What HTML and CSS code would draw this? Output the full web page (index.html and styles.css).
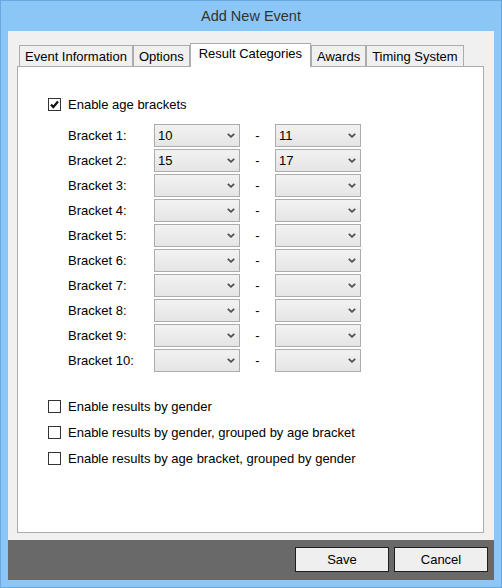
FILE: index.html
```html
<!DOCTYPE html>
<html lang="en">
<head>
    <meta charset="UTF-8">
    <title>Add New Event</title>
    <link rel="stylesheet" href="styles.css">
</head>
<body>
    <div class="window">
        <div class="titlebar">Add New Event</div>
        <div class="client">
            <div class="tabs">
                <div class="tabstrip">
                    <div class="tab">Event Information</div>
                    <div class="tab">Options</div>
                    <div class="tab active">Result Categories</div>
                    <div class="tab">Awards</div>
                    <div class="tab">Timing System</div>
                </div>
                <div class="pane">
                    <label class="check">
                        <span class="box"><svg width="11" height="11" viewBox="0 0 11 11"><polyline points="2,5.5 4.3,8 9,2.5" fill="none" stroke="#111" stroke-width="2.2"/></svg></span>
                        Enable age brackets
                    </label>

                    <div class="brackets" id="brackets"></div>

                    <div class="options">
                        <label class="check"><span class="box"></span>Enable results by gender</label>
                        <label class="check"><span class="box"></span>Enable results by gender, grouped by age bracket</label>
                        <label class="check"><span class="box"></span>Enable results by age bracket, grouped by gender</label>
                    </div>
                </div>
            </div>
            <div class="buttonbar">
                <button class="btn">Save</button>
                <button class="btn">Cancel</button>
            </div>
        </div>
    </div>

    <script>
        // bracket rows
        const values = [['10', '11'], ['15', '17']];
        const chevron = '<svg width="8" height="5" viewBox="0 0 8 5"><polyline points="0.8,0.8 4,3.8 7.2,0.8" fill="none" stroke="#505050" stroke-width="1.8"/></svg>';

        function dropdown(value) {
            return '<div class="select"><span>' + (value || '') + '</span>' + chevron + '</div>';
        }

        const brackets = document.getElementById('brackets');
        for (let i = 0; i < 10; i++) {
            const pair = values[i] || ['', ''];
            brackets.innerHTML +=
                '<div class="label">Bracket ' + (i + 1) + ':</div>' +
                dropdown(pair[0]) +
                '<div class="dash">-</div>' +
                dropdown(pair[1]);
        }
    </script>
</body>
</html>
```

FILE: styles.css
```css
body {
    margin: 0;
    font-family: 'Liberation Sans', Arial, sans-serif;
    font-size: 13px;
    color: #000;
}
.window {
    width: 502px;
    height: 588px;
    box-sizing: border-box;
    border: 1px solid #6aa8e0;
    background-color: #8bc6f6;
    display: flex;
    flex-direction: column;
}
.titlebar {
    height: 30px;
    line-height: 30px;
    text-align: center;
    font-size: 14.5px;
    color: #333;
}
.client {
    margin: 0 7px;
    height: 549px;
    background-color: #f0f0f0;
    display: flex;
    flex-direction: column;
}
.tabs {
    margin: 12px 10px 0 9px;
}
.tabstrip {
    display: flex;
    align-items: flex-end;
    height: 23px;
    padding-left: 2px;
}
.tab {
    height: 21px;
    line-height: 21px;
    box-sizing: border-box;
    padding: 0 5px;
    border: 1px solid #acacac;
    border-bottom: none;
    background-color: #f0f0f0;
    white-space: nowrap;
}
.tab.active {
    height: 24px;
    line-height: 20px;
    padding: 0 8px;
    margin-bottom: -1px;
    background-color: #fff;
    position: relative;
    z-index: 1;
}
.pane {
    height: 467px;
    box-sizing: border-box;
    border: 1px solid #acacac;
    background-color: #fff;
    padding: 30px 0 0 30px;
}
.check {
    display: flex;
    align-items: center;
    height: 15px;
    line-height: 15px;
    gap: 7px;
}
.box {
    width: 13px;
    height: 13px;
    box-sizing: border-box;
    border: 1px solid #333;
    background-color: #fff;
    display: flex;
    align-items: center;
    justify-content: center;
}
.brackets {
    margin: 12px 0 0 20px;
    display: grid;
    grid-template-columns: 86px 86px 35px 86px;
    grid-auto-rows: 23px;
    row-gap: 2px;
    align-items: center;
}
.select {
    height: 23px;
    box-sizing: border-box;
    border: 1px solid #acacac;
    background: linear-gradient(#f2f2f2, #e5e5e5);
    display: flex;
    align-items: center;
    justify-content: space-between;
    padding: 0 3px 0 3px;
}
.select svg {
    margin-right: 1px;
}
.dash {
    text-align: center;
}
.options {
    margin-top: 27px;
    display: flex;
    flex-direction: column;
    gap: 11px;
}
.buttonbar {
    margin-top: 7px;
    height: 40px;
    background-color: #696969;
    display: flex;
    justify-content: flex-end;
    align-items: flex-start;
    gap: 5px;
    padding: 7px 6px 0 0;
    box-sizing: border-box;
}
.btn {
    width: 94px;
    height: 25px;
    border: 1px solid #1e1e1e;
    background-color: #efefef;
    font-family: 'Liberation Sans', Arial, sans-serif;
    font-size: 13px;
    color: #000;
    padding: 0;
}
```
